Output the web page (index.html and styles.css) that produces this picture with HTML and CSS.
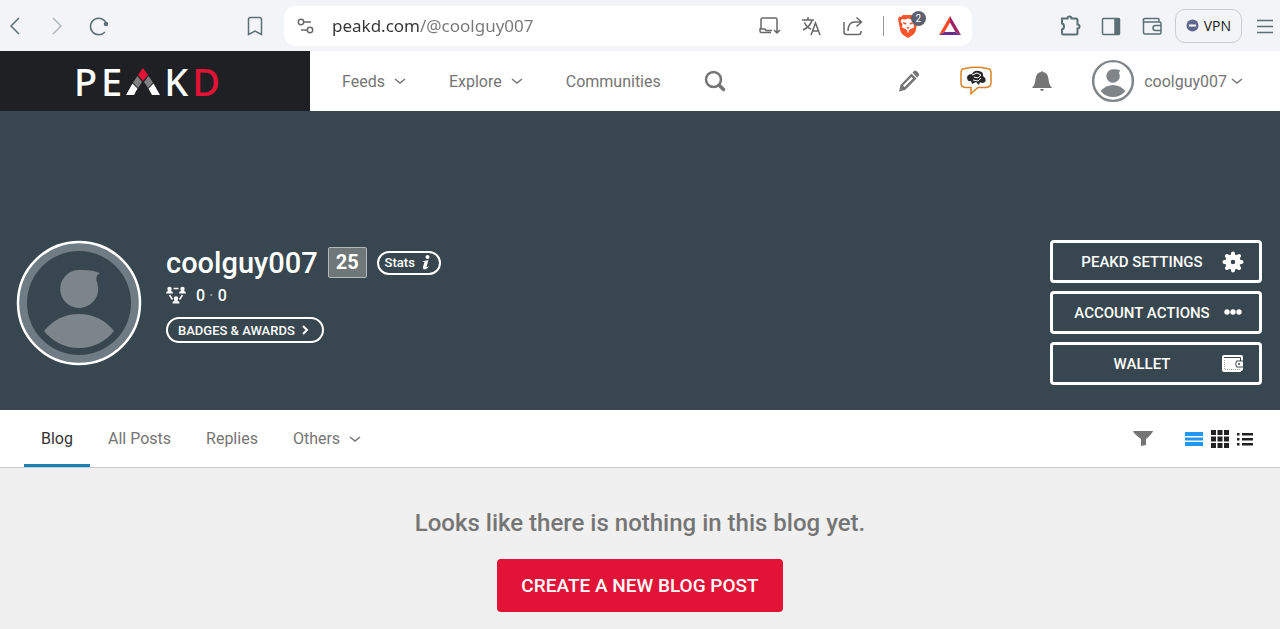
FILE: index.html
```html
<!DOCTYPE html>
<html lang="en">
<head>
    <meta charset="UTF-8">
    <meta name="viewport" content="width=device-width, initial-scale=1.0">
    <title>coolguy007 | PeakD</title>
    <link rel="stylesheet" href="styles.css">
</head>
<body>
    <!-- browser toolbar -->
    <div class="toolbar">
        <div class="toolbar-nav">
            <button class="icon-btn" aria-label="Back"><svg width="24" height="24" viewBox="0 0 24 24"><path d="M16 4 8 12l8 8" /></svg></button>
            <button class="icon-btn disabled" aria-label="Forward"><svg width="24" height="24" viewBox="0 0 24 24"><path d="m8 4 8 8-8 8" /></svg></button>
            <button class="icon-btn" aria-label="Reload"><svg width="24" height="24" viewBox="0 0 24 24"><path d="M19.500 9.500A8.300 8.300 0 1 0 18 18" /><circle class="solid" cx="19" cy="10" r="1.500" /></svg></button>
        </div>
        <button class="icon-btn bookmark" aria-label="Bookmark"><svg width="24" height="24" viewBox="0 0 24 24"><path d="M5.500 5.500a2 2 0 0 1 2-2h9a2 2 0 0 1 2 2v15L12 17l-6.500 3.500z" /></svg></button>
        <form class="address">
            <button type="button" class="icon-btn" aria-label="Site settings"><svg width="20" height="20" viewBox="0 0 20 20"><circle cx="5" cy="6" r="2.700" /><path d="M8 6h7M5 14h6" /><circle cx="14" cy="14" r="2.700" /></svg></button>
            <input class="url" type="text" aria-label="Address" value="peakd.com/@coolguy007" spellcheck="false">
            <button type="button" class="icon-btn" aria-label="Install"><svg width="24" height="24" viewBox="0 0 24 24"><path d="M20 12V5.500A1.500 1.500 0 0 0 18.500 4h-13A1.500 1.500 0 0 0 4 5.500V15M14 18.500H4.500A1.500 1.500 0 0 1 3 17v-2h5l1 1.500h6M20 12v7M17 16l3 3 3-3" /></svg></button>
            <button type="button" class="icon-btn" aria-label="Translate"><svg width="24" height="24" viewBox="0 0 24 24"><path d="M3 6h12M9 3v3M13 6c-1 5-5 8-9 10M5.500 8.500C7 12 9 14 12 15M12 21l4.500-12L21 21M13.500 17h6" /></svg></button>
            <button type="button" class="icon-btn" aria-label="Share"><svg width="24" height="24" viewBox="0 0 24 24"><path d="M3 8v10a2.500 2.500 0 0 0 2.500 2.500h12A2.500 2.500 0 0 0 20 18v-1M7 17c0-6 3-9 7-9h6M15.500 3.500 20.500 8l-5 4.500" /></svg></button>
            <span class="divider"></span>
            <button type="button" class="shield" aria-label="Shields">
                <svg width="24" height="26" viewBox="0 0 24 26"><path fill="#fb542b" d="M7 2h10l2 2 2-.500 1 3-.500 2-2 10-2 3L12 25l-5.500-3.500-2-3-2-10L2 6.500l1-3L5 4z" /><path fill="#fff" d="m6 6 3 .500 3-1 3 1 3-.500 1.500 2.500-2 2.500.500 3.500-3.500 1.500-2.500 4-2.500-4L6 14.500 6.500 11l-2-2.500z" /><path fill="#fb542b" d="m7 9 3.500 1-.500 1.500-2.500-.500zM17 9l-3.500 1 .500 1.500 2.500-.500zM10.500 14h3L12 16.500zM8.500 16l3.500 2 3.500-2-1 3-2.500-1-2.500 1z" /></svg>
                <span class="count">2</span>
            </button>
            <button type="button" class="icon-btn" aria-label="Rewards"><svg class="filled" width="24" height="24" viewBox="0 0 24 24"><path fill="#ff4724" d="M12 2 1 21l5.500-3L12 8.500z" /><path fill="#9e1f63" d="m12 2 11 19-5.500-3L12 8.500z" /><path fill="#662d91" d="M1 21h22l-5.500-3h-11z" /></svg></button>
        </form>
        <div class="toolbar-actions">
            <button class="icon-btn heavy" aria-label="Extensions"><svg width="24" height="24" viewBox="0 0 24 24"><path d="M4 4.500h5.500q0-2 2-2t2 2H18a1.500 1.500 0 0 1 1.500 1.500v4.500q2 0 2 2t-2 2V19a1.500 1.500 0 0 1-1.500 1.500H5.500A1.500 1.500 0 0 1 4 19v-3.500q2-.500 2-3t-2-3z" /></svg></button>
            <button class="icon-btn" aria-label="Sidebar"><svg width="24" height="24" viewBox="0 0 24 24"><rect x="3.500" y="4.500" width="17" height="16" rx="1" /><path class="solid" d="M16 5h4v15h-4z" /></svg></button>
            <button class="icon-btn" aria-label="Wallet"><svg width="24" height="24" viewBox="0 0 24 24"><path d="M3.500 6v12.500a1.500 1.500 0 0 0 1.500 1.500h14.500a1.500 1.500 0 0 0 1.500-1.500V9.500A1.500 1.500 0 0 0 19.500 8H5a1.500 1.500 0 0 1 0-3.500h13a1 1 0 0 1 1 1V8M21 11.500h-5.500a2.500 2.500 0 0 0 0 5H21" /></svg></button>
            <button class="vpn"><svg width="13" height="13" viewBox="0 0 13 13"><circle cx="6.500" cy="6.500" r="6" fill="#62678f" /><path d="M3 6.500h7" stroke="#fff" stroke-width="2" /></svg>VPN</button>
            <button class="icon-btn" aria-label="Menu"><svg width="24" height="24" viewBox="0 0 24 24"><path d="M4 6.500h16M4 12.500h16M4 18.500h16" /></svg></button>
        </div>
    </div>

    <!-- site header -->
    <header class="header">
        <a class="logo" href="/" aria-label="PeakD">
            <span>P</span><span>E</span>
            <svg width="34" height="27" viewBox="0 0 34 27"><path fill="#e31337" d="m17 0 5 7-5 6-5-6z" /><path fill="#808080" d="m11.500 8 4.500 6-4 6-5-5.500zM22.500 8 18 14l4 6 5-5.500z" /><path fill="#fff" d="m6.500 15.500 5 5L8 27H0zM27.500 15.500l-5 5L26 27h8z" /></svg>
            <span>K</span><span class="logo-d">D</span>
        </a>
        <nav class="main-nav">
            <a href="#">Feeds <svg class="chevron" width="12" height="8" viewBox="0 0 12 8"><path d="m1 2 5 4 5-4" /></svg></a>
            <a href="#">Explore <svg class="chevron" width="12" height="8" viewBox="0 0 12 8"><path d="m1 2 5 4 5-4" /></svg></a>
            <a href="#">Communities</a>
            <button class="plain-btn" aria-label="Search"><svg width="22" height="22" viewBox="0 0 22 22" fill="none" stroke="#757575"><circle cx="9.500" cy="9.500" r="7.500" stroke-width="2.500" /><path d="m15.500 15.500 4 4" stroke-width="3.500" stroke-linecap="round" /></svg></button>
        </nav>
        <div class="user-nav">
            <a href="#" aria-label="Write post"><svg width="22" height="22" viewBox="0 0 22 22" fill="#757575"><path fill-rule="evenodd" d="M13.500 3.500 18.500 8.500 7 20l-6 1.500L2.500 15zM13.500 7 5 15.500 6.500 17 15 8.500z" /><path d="m14.500 2.500 1.500-1.500q1.500-1 3 .500l1.500 1.500q1.500 1.500 0 3L19 7.500z" /></svg></a>
            <a href="#" aria-label="Chat"><svg width="34" height="32" viewBox="0 0 34 32"><path fill="#fff" stroke="#d9822b" stroke-width="1.500" d="M6 3.500Q17 1 28 3.500q4 0 4 4.500v10q0 4-5 4.500h-8l-7 6v-6H7q-5 0-5-4.500V8q0-4.500 4-4.500z" /><path fill="#282828" d="M8 12q1-3 5-3 2-4 7-3 5 1 4 5 4 3 2 6-3 2-5 0l-1 3-3-3-4 2-1-3q-4 1-4-4z" /><path fill="none" stroke="#fff" stroke-width="1" d="m13 10 5-2 4 2-3 3-4-1M14 15l5 1 3-3" /></svg></a>
            <a href="#" aria-label="Notifications"><svg width="20" height="22" viewBox="0 0 20 22" fill="#757575"><path d="M9 2q1-2 2 0 5 1 5.500 7 .500 6 3.500 9H0q3-3 3.500-9Q4 3 9 2zM8 19h4q-.500 2-2 2t-2-2z" /></svg></a>
            <a class="account" href="#"><svg width="44" height="44" viewBox="0 0 124 124"><circle cx="62" cy="62" r="56" fill="#fff" stroke="#808589" stroke-width="7" /><g fill="#808589"><path d="M82 32q-5 7-1 13a19 19 0 1 1-19-16q12-1 20 3z" /><path d="M27 90q15-17 35-17t35 17q-14 17-35 17T27 90z" /></g></svg>
                <span class="account-name">coolguy007 <svg class="chevron" width="12" height="8" viewBox="0 0 12 8"><path d="m1 2 5 4 5-4" /></svg></span></a>
        </div>
    </header>

    <!-- profile cover -->
    <section class="cover">
        <div class="profile">
            <svg class="avatar" width="126" height="126" viewBox="0 0 126 126"><circle cx="63" cy="63" r="61" fill="#707c83" stroke="#fff" stroke-width="2.500" /><circle cx="63" cy="63" r="52" fill="#38474f" /><g fill="#7b858b"><path d="M84 33q-6 3-2.500 11a19 19 0 1 1-17.500-14q12-.500 20 3z" /><path d="M28 91q14-17 35-17t35 17q-14 17-35 17T28 91z" /></g></svg>
            <div class="profile-info">
                <div class="name-row">
                    <h1>coolguy007</h1>
                    <span class="reputation">25</span>
                    <button class="pill stats">Stats <svg width="10" height="15" viewBox="0 0 10 15" fill="#fff"><circle cx="6.500" cy="2" r="2" /><path d="M1 6.500 7.500 5 5.500 12q0 1 2.500-1-1 3-4 3.500Q1.500 14.500 2 12l1.500-5z" /></svg></button>
                </div>
                <div class="follow-row">
                    <svg width="20" height="18" viewBox="0 0 20 18" fill="#fff"><circle cx="3.500" cy="3" r="2.200" /><circle cx="16.500" cy="3" r="2.200" /><circle cx="10" cy="12.500" r="2.200" /><path d="M0 7.500Q0 5 3.500 4.500 7 5 7 7.500zM13 7.500q0-2.500 3.500-3Q20 5 20 7.500zM6.500 17.500q0-3 3.500-3.500 3.500.500 3.500 3.500z" /><path fill="none" stroke="#fff" stroke-width="1.500" d="M7.500 2.500h5M3.500 9l3 4.500M16.500 9l-3 4.500" /></svg>
                    <span>0</span><span class="dot">·</span><span>0</span>
                </div>
                <button class="pill badges">BADGES &amp; AWARDS <svg width="8" height="10" viewBox="0 0 8 10"><path d="m2 1 4 4-4 4" fill="none" stroke="#fff" stroke-width="2" /></svg></button>
            </div>
        </div>
        <div class="cover-actions">
            <button class="outline-btn"><span>PEAKD SETTINGS</span><svg width="22" height="22" viewBox="0 0 22 22"><circle cx="11" cy="11" r="5" fill="none" stroke="#fff" stroke-width="5.500" /><path stroke="#fff" stroke-width="4" stroke-linecap="round" d="M11 2.500v2M11 17.500v2M2.500 11h2M17.500 11h2M5 5l1 1M16 16l1 1M17 5l-1 1M6 16l-1 1" /></svg></button>
            <button class="outline-btn"><span>ACCOUNT ACTIONS</span><svg width="22" height="22" viewBox="0 0 22 22" fill="#fff"><circle cx="5" cy="10" r="2.700" /><circle cx="11" cy="10" r="2.700" /><circle cx="17" cy="10" r="2.700" /></svg></button>
            <button class="outline-btn"><span>WALLET</span><svg width="22" height="22" viewBox="0 0 22 22"><path fill="#fff" d="M0 4q0-2 2-2h17q2 0 2 2v12q0 2-2 2v1H2q-2 0-2-2z" /><path fill="none" stroke="#38474f" d="M2 4.500h16.500V8M21 8h-6.500q-1.500 3 0 6H21" /><path fill="none" stroke="#9aa4a9" stroke-dasharray="1 1" d="M2.500 7v9.500H18V15" /><circle cx="17" cy="11" r="1" fill="#38474f" /></svg></button>
        </div>
    </section>

    <nav class="tabs">
        <a class="tab active" href="#">Blog</a>
        <a class="tab" href="#">All Posts</a>
        <a class="tab" href="#">Replies</a>
        <a class="tab" href="#">Others <svg class="chevron" width="12" height="8" viewBox="0 0 12 8"><path d="m1 2 5 4 5-4" /></svg></a>
        <div class="view-options">
            <button class="plain-btn filter" aria-label="Filter"><svg width="20" height="18" viewBox="0 0 20 18"><path fill="#757575" d="M0 1h20q-1 3-7 8v6l-5 1V9Q1 4 0 1z" /></svg></button>
            <button class="plain-btn" aria-label="List view"><svg width="18" height="18" viewBox="0 0 18 18"><path fill="#2196f3" d="M0 2h18v4H0zM0 7.500h18v3H0zM0 12h18v4H0z" /></svg></button>
            <button class="plain-btn" aria-label="Grid view"><svg width="18" height="18" viewBox="0 0 18 18"><path fill="#222" d="M0 0h5v5H0zM6.500 0h5v5h-5zM13 0h5v5h-5zM0 6.500h5v5H0zM6.500 6.500h5v5h-5zM13 6.500h5v5h-5zM0 13h5v5H0zM6.500 13h5v5h-5zM13 13h5v5h-5z" /></svg></button>
            <button class="plain-btn" aria-label="Compact view"><svg width="16" height="18" viewBox="0 0 16 18"><path fill="#222" d="M0 3h2.500v2.500H0zM5 3h11v2.500H5zM0 8h2.500v2.500H0zM5 8h11v2.500H5zM0 13h2.500v2.500H0zM5 13h11v2.500H5z" /></svg></button>
        </div>
    </nav>

    <main class="feed">
        <p class="empty-text">Looks like there is nothing in this blog yet.</p>
        <button class="create-btn">CREATE A NEW BLOG POST</button>
    </main>
</body>
</html>
```
FILE: styles.css
```css
:root {
    --clr-cover: #38474f;
    --clr-red: #e31337;
    --clr-text: #757575;
    --clr-chrome: #5b6f75;
}
* {
    box-sizing: border-box;
}
body {
    margin: 0;
    background-color: #f0f0f0;
    color: var(--clr-text);
    font-family: Roboto, sans-serif;
    font-size: 16px;
}
a {
    color: inherit;
    text-decoration: none;
}
button {
    font-family: inherit;
    cursor: pointer;
}
svg {
    display: block;
    flex: none;
}

/* browser toolbar */
.toolbar {
    display: flex;
    align-items: center;
    height: 51px;
    padding: 0 3px;
    background-color: #f2f4f7;
}
.toolbar-nav {
    display: flex;
    gap: 18px;
    margin-right: 132px;
}
.icon-btn,
.plain-btn {
    border: 0;
    padding: 0;
    background: none;
}
.icon-btn svg {
    fill: none;
    stroke: var(--clr-chrome);
    stroke-width: 1.5;
}
.icon-btn .solid {
    fill: var(--clr-chrome);
}
.heavy svg {
    stroke-width: 2;
}
.disabled {
    opacity: 0.45;
}
.bookmark {
    margin-right: 17px;
}
.address {
    flex: 1;
    display: flex;
    align-items: center;
    gap: 18px;
    height: 40px;
    padding: 0 10px 0 12px;
    border-radius: 12px;
    background-color: #fff;
}
.address .icon-btn svg {
    stroke: #686868;
}
.address .icon-btn svg.filled {
    stroke: none;
}
.url {
    flex: 1;
    min-width: 0;
    margin-left: -2px;
    border: 0;
    padding: 0;
    outline: 0;
    font-family: "Noto Sans", sans-serif;
    font-size: 17px;
    color: transparent;
    /* domain is darker than the path */
    background: linear-gradient(to right, #333 87px, #777 87px);
    -webkit-background-clip: text;
    background-clip: text;
}
.divider {
    width: 1px;
    height: 20px;
    margin-right: -6px;
    background-color: #999;
}
.shield {
    position: relative;
    border: 0;
    padding: 0;
    background: none;
}
.count {
    position: absolute;
    top: -2px;
    right: -6px;
    width: 15px;
    height: 15px;
    border-radius: 50%;
    background-color: #5c606f;
    color: #fff;
    font-size: 10px;
    line-height: 15px;
}
.toolbar-actions {
    display: flex;
    align-items: center;
    gap: 17px;
    margin-left: 86px;
}
.vpn {
    display: flex;
    align-items: center;
    gap: 5px;
    height: 34px;
    margin: 0 -6px;
    padding: 0 10px;
    border: 1px solid #c9ccd2;
    border-radius: 10px;
    background: none;
    font-family: "Open Sans", sans-serif;
    font-size: 14px;
    color: #222;
}

/* header */
.header {
    display: flex;
    height: 60px;
    background-color: #fff;
}
.logo {
    display: flex;
    align-items: center;
    justify-content: center;
    gap: 4px;
    width: 310px;
    padding-right: 16px;
    background-color: #1e2023;
    color: #fff;
    font-family: "Noto Sans", sans-serif;
    font-size: 38px;
    font-weight: 500;
    line-height: 58px;
}
.logo-d {
    color: var(--clr-red);
}
.main-nav {
    display: flex;
    align-items: center;
    gap: 43px;
    padding-left: 32px;
}
.main-nav a,
.account-name,
.tab {
    display: flex;
    align-items: center;
    gap: 9px;
}
.chevron {
    fill: none;
    stroke: currentColor;
    stroke-width: 1.5;
}
.user-nav {
    display: flex;
    align-items: center;
    gap: 39px;
    margin-left: auto;
    padding-right: 37px;
}
.account {
    display: flex;
    align-items: center;
    gap: 9px;
}
.account-name {
    gap: 4px;
}

/* cover */
.cover {
    display: flex;
    justify-content: space-between;
    padding: 129px 18px 25px 16px;
    background-color: var(--clr-cover);
    color: #fff;
}
.profile {
    display: flex;
    gap: 24px;
}
.name-row {
    display: flex;
    align-items: center;
    gap: 10px;
    height: 45px;
}
.name-row h1 {
    margin: 0;
    font-size: 29px;
    font-weight: 500;
}
.reputation {
    padding: 0 7px;
    border: 1px solid #b0b8bb;
    border-radius: 2px;
    background-color: #6f7779;
    font-size: 20px;
    font-weight: 700;
    line-height: 29px;
}
.pill {
    display: flex;
    align-items: center;
    border: 2px solid #fff;
    border-radius: 13px;
    background: none;
    color: #fff;
    font-size: 13px;
    font-weight: 500;
}
.stats {
    gap: 6px;
    height: 24px;
    padding: 0 8px 0 6px;
}
.follow-row {
    display: flex;
    align-items: center;
    gap: 4px;
    height: 20px;
    font-weight: 500;
}
.follow-row svg {
    margin-right: 6px;
}
.dot {
    color: #8b969b;
}
.badges {
    gap: 6px;
    height: 26px;
    margin-top: 12px;
    padding: 0 13px 0 10px;
}
.cover-actions {
    display: grid;
    gap: 8px;
    width: 212px;
}
.outline-btn {
    display: flex;
    align-items: center;
    height: 43px;
    padding: 0 15px 0 9px;
    border: 3px solid #fff;
    border-radius: 4px;
    background: none;
    color: #fff;
    font-size: 15px;
    font-weight: 500;
}
.outline-btn span {
    flex: 1;
    text-align: center;
}

/* tabs */
.tabs {
    display: flex;
    gap: 1px;
    height: 58px;
    padding: 0 27px 0 24px;
    border-bottom: 1px solid #ccc;
    background-color: #fff;
}
.tab {
    padding: 0 17px;
    border-bottom: 3px solid transparent;
    border-top: 3px solid transparent;
}
.active {
    border-bottom-color: #1a83b8;
    color: #333;
}
.view-options {
    display: flex;
    align-items: center;
    gap: 8px;
    margin-left: auto;
}
.filter {
    margin-right: 24px;
}

.feed {
    display: flex;
    flex-direction: column;
    align-items: center;
    gap: 20px;
    padding: 39px 16px 17px;
}
.empty-text {
    margin: 0;
    font-size: 24px;
    font-weight: 500;
    line-height: 32px;
}
.create-btn {
    height: 53px;
    padding: 0 24px;
    border: 0;
    border-radius: 4px;
    background-color: var(--clr-red);
    color: #fff;
    font-size: 19px;
    font-weight: 500;
}
```
